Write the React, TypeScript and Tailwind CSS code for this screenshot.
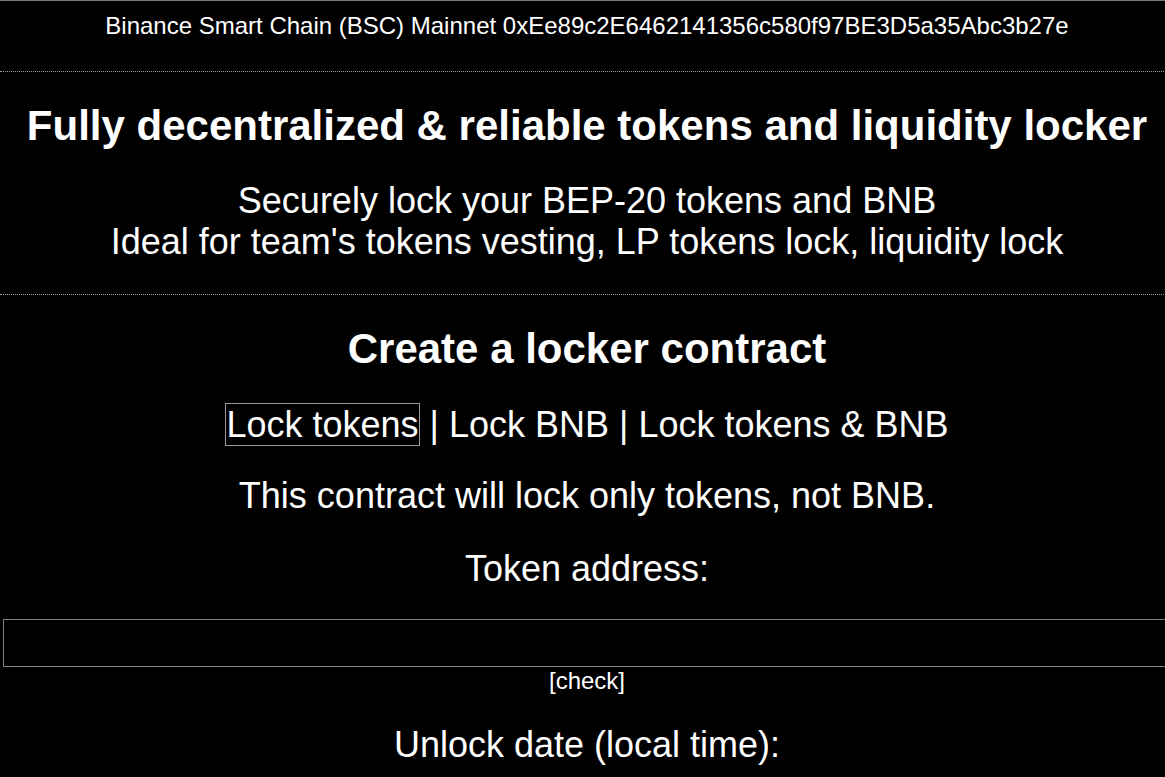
export default function App() {
  return (
    <div className="w-full overflow-hidden bg-black">
      <div className="w-[1174px] min-h-[777px] bg-black text-white text-center border-t border-[#777777]" style={{ fontFamily: '"Liberation Sans", Arial, sans-serif' }}>
        <div className="pt-[11px] pb-[31px] text-[24px] leading-[28px]">
          Binance Smart Chain (BSC) Mainnet 0xEe89c2E6462141356c580f97BE3D5a35Abc3b27e
        </div>
        <div className="border-t border-dotted border-[#a0a0a0]" />

        <h1 className="mt-[30px] text-[42px] font-bold leading-[48px]">
          Fully decentralized &amp; reliable tokens and liquidity locker
        </h1>
        <p className="mt-[30px] text-[36px] leading-[41px]">
          Securely lock your BEP-20 tokens and BNB
          <br />
          Ideal for team's tokens vesting, LP tokens lock, liquidity lock
        </p>
        <div className="mt-[32px] border-t border-dotted border-[#a0a0a0]" />

        <h2 className="mt-[30px] text-[42px] font-bold leading-[48px]">Create a locker contract</h2>

        <div className="mt-[31px] text-[36px] leading-[42px]">
          <span className="border border-[#9a9a9a]">Lock tokens</span> | <span>Lock BNB</span> |{' '}
          <span>Lock tokens &amp; BNB</span>
        </div>

        <p className="mt-[29px] text-[36px] leading-[42px]">This contract will lock only tokens, not BNB.</p>

        <p className="mt-[31px] text-[36px] leading-[42px]">Token address:</p>

        <input
          type="text"
          className="mt-[29px] ml-[3px] block w-[1171px] h-[48px] border border-[#808080] bg-black text-white"
        />
        <div className="text-[24px] leading-[28px]">[check]</div>

        <p className="mt-[29px] text-[36px] leading-[42px]">Unlock date (local time):</p>
      </div>
    </div>
  )
}
